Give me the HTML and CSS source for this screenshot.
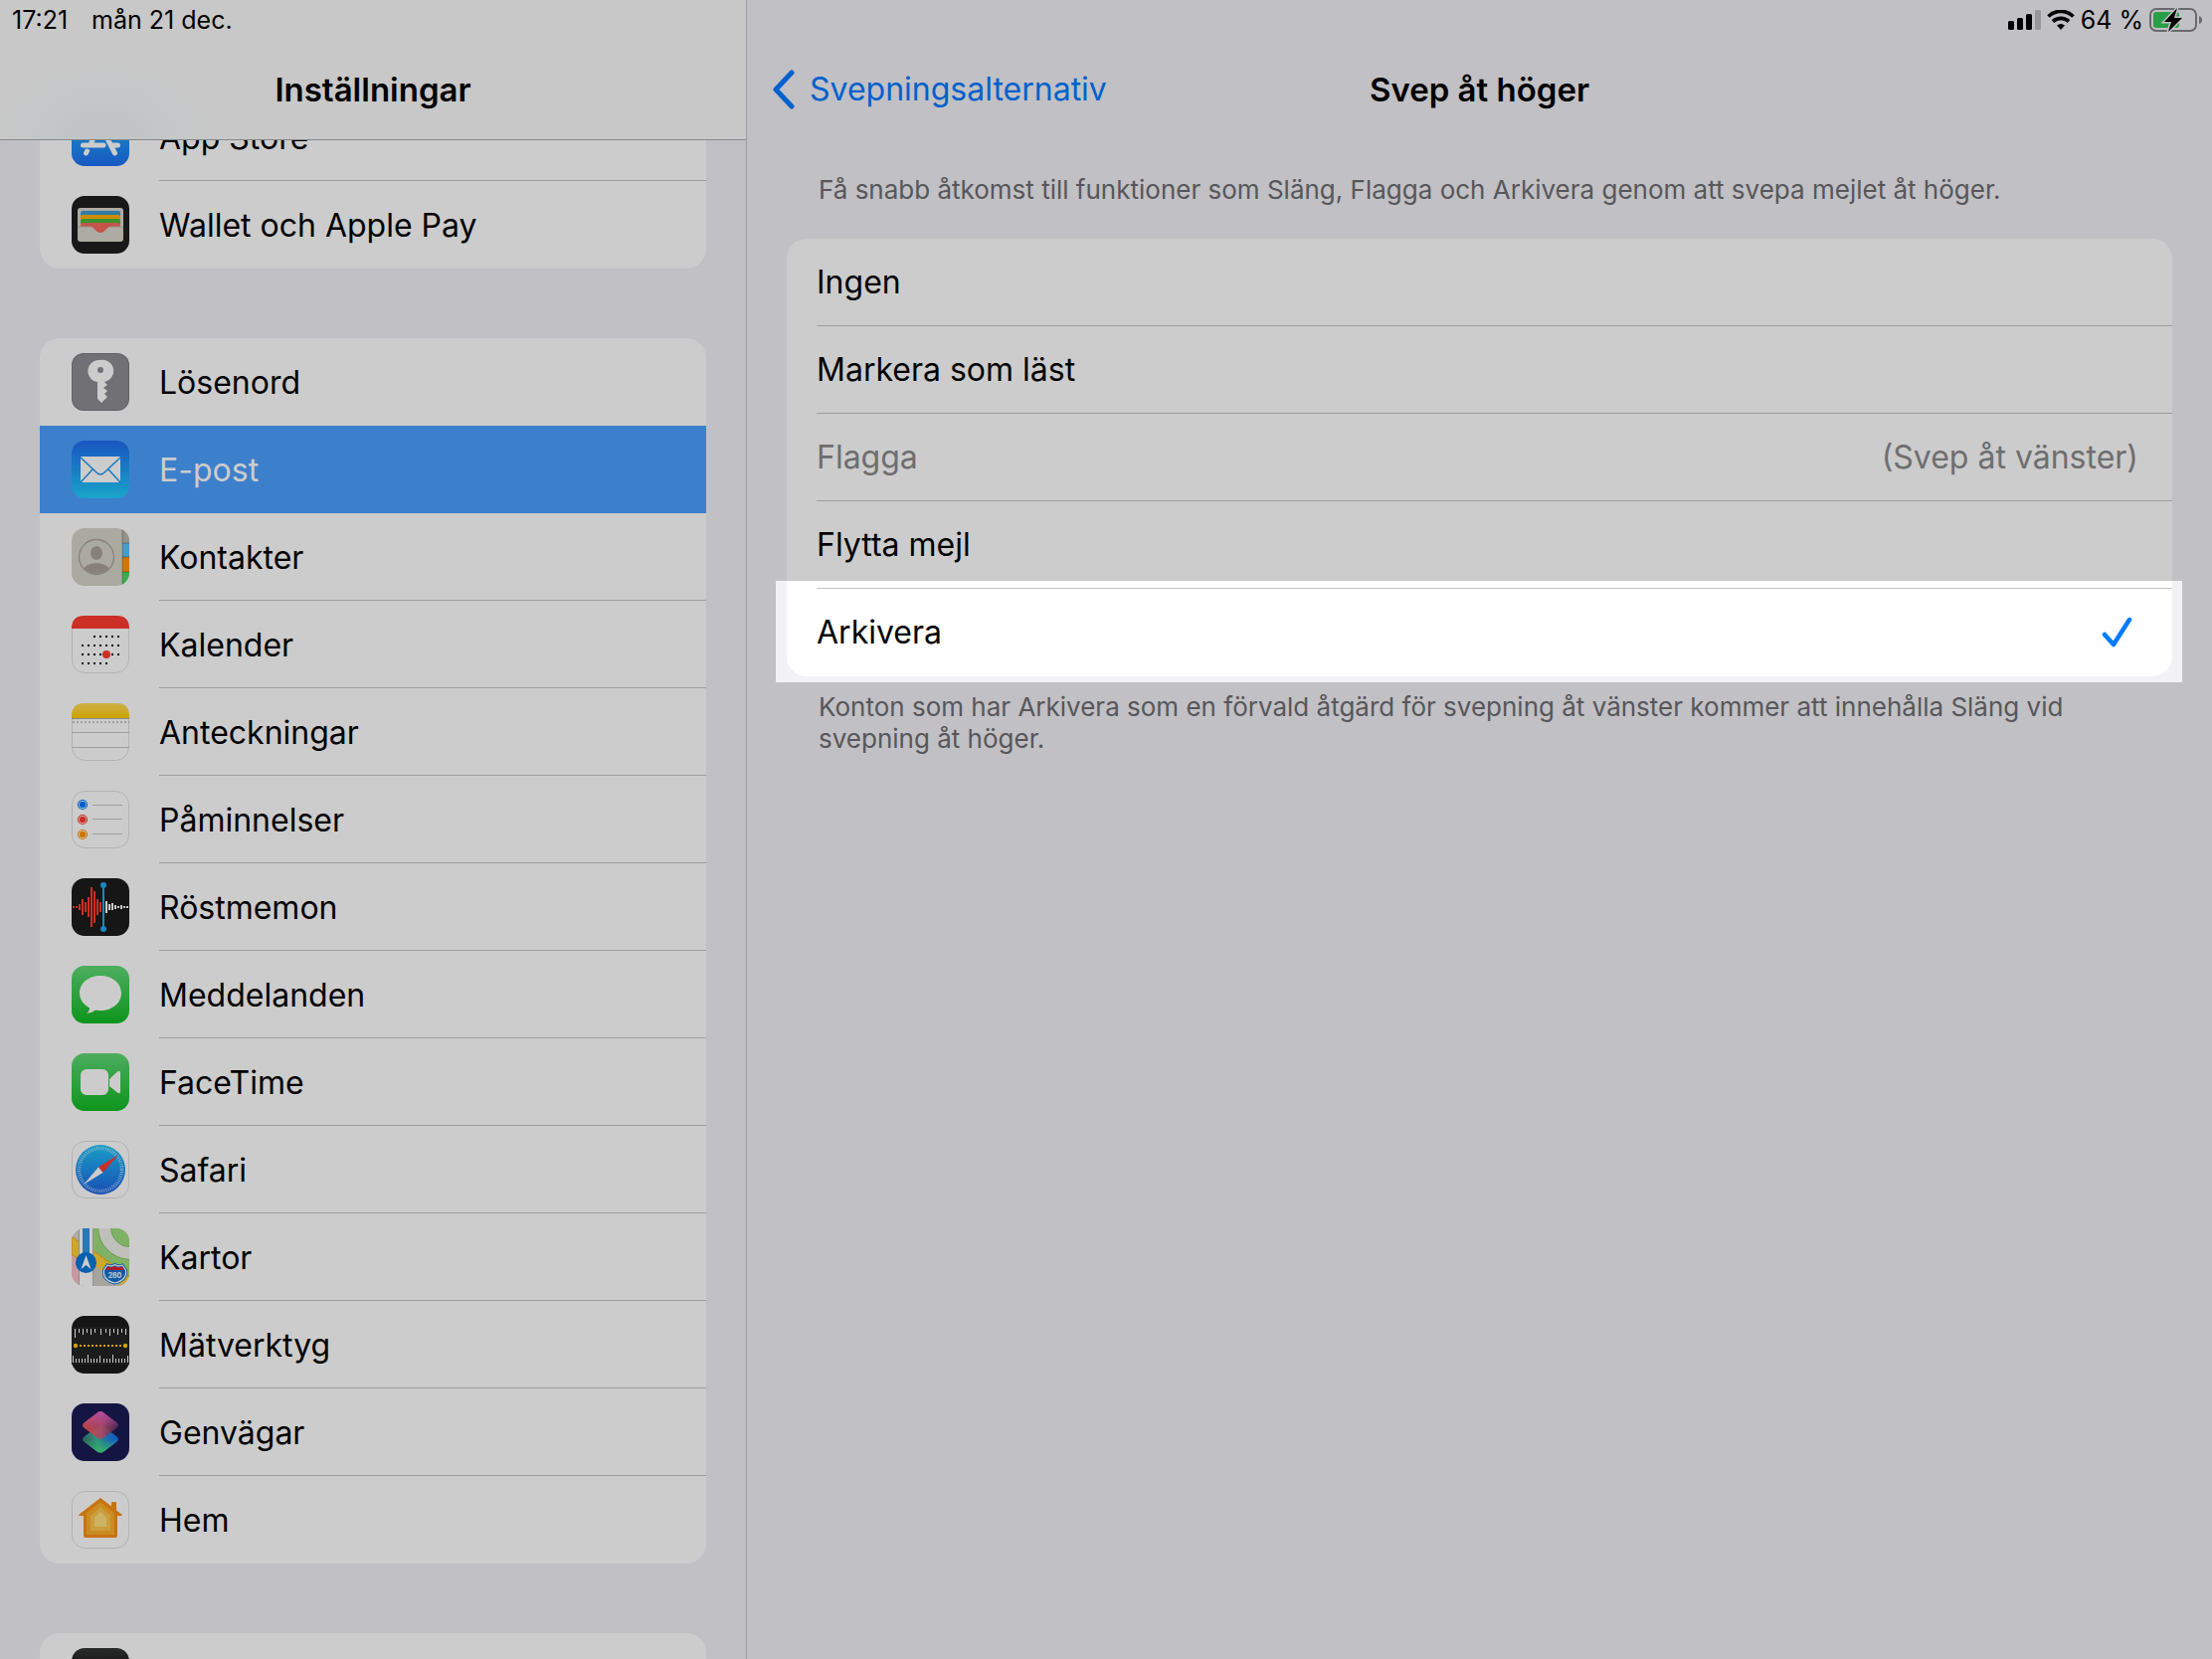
FILE: index.html
```
<!DOCTYPE html>
<html lang="sv">
<head>
<meta charset="utf-8">
<meta name="viewport" content="width=device-width, initial-scale=1">
<title>Inställningar – Svep åt höger</title>
<link rel="stylesheet" href="styles.css">
</head>
<body>
<div class="app">
  <aside class="sidebar">
    <header class="sidebar-header">
      <div class="status">
        <time>17:21</time>
        <span>mån 21 dec.</span>
      </div>
      <h1 class="title sidebar-title">Inställningar</h1>
    </header>
    <nav class="sidebar-list" aria-label="Inställningar">
      <ul class="card scrolled">
        <li><a class="item" href="#appstore">
          <svg class="icon" viewBox="0 0 58 58" aria-hidden="true">
            <defs><linearGradient id="g-store" x1="0" y1="0" x2="0" y2="1"><stop offset="0" stop-color="#1fc4fb"/><stop offset="1" stop-color="#1f6ff2"/></linearGradient></defs>
            <rect width="58" height="58" rx="13" fill="url(#g-store)"/>
            <g stroke="#fff" stroke-width="5" stroke-linecap="round" fill="none"><path d="M32 11L20 34M15.500 43L14.500 45M26 11L43.500 45M11.500 37H32M41 37H46.500"/></g>
          </svg>
          <span class="item-label">App Store</span></a></li>
        <li><a class="item" href="#wallet">
          <svg class="icon" viewBox="0 0 58 58" aria-hidden="true">
            <rect width="58" height="58" rx="13" fill="#1d1e1d"/>
            <rect x="6" y="12" width="46" height="34" rx="3" fill="#d9d6cc"/>
            <path d="M9 20V17Q9 15 11 15H47Q49 15 49 17V20Z" fill="#3c9bd0"/>
            <path d="M9 24V21Q9 19 11 19H47Q49 19 49 21V24Z" fill="#ffb00a"/>
            <path d="M9 28V25Q9 23 11 23H47Q49 23 49 25V28Z" fill="#48b83a"/>
            <path d="M9 31V29Q9 27 11 27H47Q49 27 49 29V31H39C35 31 34 37 29 37C24 37 23 31 19 31Z" fill="#f56b5e"/>
            <path d="M6 31H19M39 31H52" stroke="#b9b6ad"/>
          </svg>
          <span class="item-label">Wallet och Apple Pay</span></a></li>
      </ul>
      <ul class="card">
        <li><a class="item" href="#losenord">
          <svg class="icon" viewBox="0 0 58 58" aria-hidden="true">
            <rect width="58" height="58" rx="12" fill="#7d7c81"/><rect x="1" y="1" width="56" height="56" rx="11" fill="#8e8d92"/>
            <path d="M29 7A11 11 0 0 0 26 29V46L30 50L36 44L33 41L36 38L32 35L36 32L33 29A11 11 0 0 0 29 7Z" fill="#fff"/>
            <circle cx="29" cy="17" r="3" fill="#8e8d92"/>
          </svg>
          <span class="item-label">Lösenord</span></a></li>
        <li><a class="item selected" href="#epost" aria-current="page">
          <svg class="icon" viewBox="0 0 58 58" aria-hidden="true">
            <defs><linearGradient id="g-mail" x1="0" y1="0" x2="0" y2="1"><stop offset="0" stop-color="#1f6cf0"/><stop offset="1" stop-color="#20cefd"/></linearGradient></defs>
            <rect width="58" height="58" rx="13" fill="url(#g-mail)"/>
            <rect x="9" y="16" width="40" height="26" rx="1" fill="#fff"/>
            <path d="M9 17L25 32Q29 36 33 32L49 17M9 42L21 29M49 42L37 29" fill="none" stroke="#2199ee" stroke-width="1.5"/>
          </svg>
          <span class="item-label">E-post</span></a></li>
        <li><a class="item" href="#kontakter">
          <svg class="icon" viewBox="0 0 58 58" aria-hidden="true">
            <defs><clipPath id="c-round"><rect width="58" height="58" rx="13"/></clipPath><clipPath id="c-face"><circle cx="25" cy="29" r="17"/></clipPath></defs>
            <g clip-path="url(#c-round)">
              <rect width="58" height="58" fill="#d6d5c9"/>
              <rect x="51" width="7" height="15" fill="#b9b6ae"/><rect x="51" y="15" width="7" height="14" fill="#5bc3fa"/>
              <rect x="51" y="29" width="7" height="15" fill="#ff960a"/><rect x="51" y="44" width="7" height="14" fill="#4cd864"/>
              <path d="M51 0V58M51 15H58M51 29H58M51 44H58" stroke="#000" stroke-opacity=".25"/>
              <g clip-path="url(#c-face)"><ellipse cx="25" cy="25" rx="6" ry="7" fill="#aaa299"/><ellipse cx="25" cy="44" rx="14" ry="9" fill="#aaa299"/></g>
              <circle cx="25" cy="29" r="17.5" fill="none" stroke="#aaa299" stroke-width="1.3"/>
            </g>
          </svg>
          <span class="item-label">Kontakter</span></a></li>
        <li><a class="item" href="#kalender">
          <svg class="icon" viewBox="0 0 58 58" aria-hidden="true">
            <rect x=".5" y=".5" width="57" height="57" rx="13" fill="#fff" stroke="#dfdfe0"/>
            <path d="M0 13Q0 0 13 0H45Q58 0 58 13Z" fill="#ff3b30"/>
            <path d="M22 21H48M10 30H48M10 39H48M10 48H36" stroke="#000" stroke-width="2" stroke-dasharray="2 4"/>
            <circle cx="35" cy="39" r="5" fill="#fff"/><circle cx="35" cy="39" r="4" fill="#ff3b30"/>
          </svg>
          <span class="item-label">Kalender</span></a></li>
        <li><a class="item" href="#anteckningar">
          <svg class="icon" viewBox="0 0 58 58" aria-hidden="true">
            <defs><linearGradient id="g-notes" x1="0" y1="0" x2="0" y2="1"><stop offset="0" stop-color="#ffdd5c"/><stop offset="1" stop-color="#ffcb05"/></linearGradient></defs>
            <rect x=".5" y=".5" width="57" height="57" rx="13" fill="#fff" stroke="#dfdfe0"/>
            <path d="M0 15V13Q0 0 13 0H45Q58 0 58 13V15Z" fill="url(#g-notes)"/>
            <path d="M0 15.500H58" stroke="#a9a9ad"/><path d="M0 29.500H58M0 44.500H58" stroke="#c6c6c6"/>
            <path d="M1 19H58" stroke="#c9c9c9" stroke-width="2" stroke-dasharray="2 2"/>
          </svg>
          <span class="item-label">Anteckningar</span></a></li>
        <li><a class="item" href="#paminnelser">
          <svg class="icon" viewBox="0 0 58 58" aria-hidden="true">
            <rect x=".5" y=".5" width="57" height="57" rx="13" fill="#fff" stroke="#dfdfe0"/>
            <path d="M21 14.500H51M21 28.500H51M21 43.500H51" stroke="#c6c6c6"/>
            <g fill="none" stroke-width="1.200"><circle cx="11" cy="14" r="4.500" stroke="#007aff"/><circle cx="11" cy="29" r="4.500" stroke="#ff3b30"/><circle cx="11" cy="44" r="4.500" stroke="#ff9500"/></g>
            <circle cx="11" cy="14" r="3.200" fill="#007aff"/><circle cx="11" cy="29" r="3.200" fill="#ff3b30"/><circle cx="11" cy="44" r="3.200" fill="#ff9500"/>
          </svg>
          <span class="item-label">Påminnelser</span></a></li>
        <li><a class="item" href="#rostmemon">
          <svg class="icon" viewBox="0 0 58 58" aria-hidden="true">
            <rect width="58" height="58" rx="13" fill="#1c1c1c"/>
            <path d="M2 28V30M5 28V30M8 26V32M11 21V37M14 24V34M17 19V39M20 9V49M23 13V45M26 21V37M29 24V34" stroke="#ff3b30" stroke-width="2"/>
            <path d="M35 23V35M38 26V32M41 25V32M44 27V31M47 28V30M50 27V31M53 28V30M56 28V30" stroke="#fff" stroke-width="2"/>
            <path d="M32 7V51" stroke="#1faaf5" stroke-width="2"/><circle cx="32" cy="7" r="3" fill="#1faaf5"/><circle cx="32" cy="51" r="3" fill="#1faaf5"/>
          </svg>
          <span class="item-label">Röstmemon</span></a></li>
        <li><a class="item" href="#meddelanden">
          <svg class="icon" viewBox="0 0 58 58" aria-hidden="true">
            <defs><linearGradient id="g-green" x1="0" y1="0" x2="0" y2="1"><stop offset="0" stop-color="#60d977"/><stop offset="1" stop-color="#12ba24"/></linearGradient></defs>
            <rect width="58" height="58" rx="13" fill="url(#g-green)"/>
            <path d="M29 10C17 10 8 17.500 8 27.500C8 34 12 39 18 42.500C18 45 17 46.500 15 47.500C19 48 22 46 24 44.500C25.500 45 27 45 29 45C41 45 50 37.500 50 27.500C50 17.500 41 10 29 10Z" fill="#fff"/>
          </svg>
          <span class="item-label">Meddelanden</span></a></li>
        <li><a class="item" href="#facetime">
          <svg class="icon" viewBox="0 0 58 58" aria-hidden="true">
            <rect width="58" height="58" rx="13" fill="url(#g-green)"/>
            <rect x="9" y="16" width="28" height="26" rx="6" fill="#fff"/>
            <path d="M38 26L46 18.500Q49 16.500 49 20V38Q49 41.500 46 39.500L38 33Z" fill="#fff"/>
          </svg>
          <span class="item-label">FaceTime</span></a></li>
        <li><a class="item" href="#safari">
          <svg class="icon" viewBox="0 0 58 58" aria-hidden="true">
            <defs><linearGradient id="g-safari" x1="0" y1="0" x2="0" y2="1"><stop offset="0" stop-color="#20c5f8"/><stop offset="1" stop-color="#1f63e4"/></linearGradient></defs>
            <rect x=".5" y=".5" width="57" height="57" rx="13" fill="#fff" stroke="#dfdfe0"/>
            <circle cx="29" cy="29" r="25" fill="url(#g-safari)"/>
            <circle cx="29" cy="29" r="21.500" fill="none" stroke="#fff" stroke-opacity=".7" stroke-width="3.500" stroke-dasharray=".8 1.450"/>
            <path d="M47 14L31.500 32L27 26.500Z" fill="#ff3b30"/><path d="M12 44L27 26.500L31.500 32Z" fill="#fff"/>
          </svg>
          <span class="item-label">Safari</span></a></li>
        <li><a class="item" href="#kartor">
          <svg class="icon" viewBox="0 0 58 58" aria-hidden="true">
            <g clip-path="url(#c-round)">
              <rect width="58" height="58" fill="#d8d6ce"/>
              <path d="M0 26L8 31V58H0Z" fill="#fbbfcb"/>
              <path d="M21 0H58V50L21 23Z" fill="#9fdf7d"/>
              <path d="M0 8L8 14V32L0 26Z" fill="#ffd138" stroke="#f0a52c"/>
              <path d="M21 22L60 50V62H52L21 37Z" fill="#ffd138" stroke="#f0a52c"/>
              <path d="M21 36L52 58H21Z" fill="#d0cec6"/>
              <path d="M33 -2C33 13 44 25 60 25" fill="none" stroke="#83b768" stroke-width="13.500"/>
              <path d="M33 -2C33 13 44 25 60 25" fill="none" stroke="#f1f0ea" stroke-width="12"/>
              <rect x="8" width="13.500" height="58" fill="#fff"/><path d="M7.500 0V58M21.500 0V58" stroke="#b4b4a8"/>
              <rect x="11" width="7" height="30" fill="#3597e2"/>
              <circle cx="14.500" cy="34.500" r="10.500" fill="#0878dc"/>
              <path d="M14.500 27L19.500 41L14.500 37L9.500 41Z" fill="#fff"/>
              <path d="M36 37Q40 39 43.500 36.500Q47 39 51 37L54.500 42Q56 52 43.500 55Q31 52 32.500 42Z" fill="#1273d2" stroke="#1273d2" stroke-width="3"/>
              <path d="M36 37Q40 39 43.500 36.500Q47 39 51 37L54.500 42Q56 52 43.500 55Q31 52 32.500 42Z" fill="#1273d2" stroke="#fff" stroke-width="1.200"/>
              <path d="M36 38.500Q40 40 43.500 38Q47 40 51 38.500L53 42H34Z" fill="#dd2430"/>
              <text class="shield-text" x="43.500" y="49.500" text-anchor="middle">280</text>
            </g>
          </svg>
          <span class="item-label">Kartor</span></a></li>
        <li><a class="item" href="#matverktyg">
          <svg class="icon" viewBox="0 0 58 58" aria-hidden="true">
            <rect width="58" height="58" rx="13" fill="#1b1b1b"/><rect y="11" width="58" height="38" fill="#242424"/>
            <path d="M3.500 13V22M7.500 13V17M11.500 13V19M15.500 13V17M19.500 13V19M23.500 13V17M29.500 13V19M34.500 13V17M38.500 13V20M42.500 13V17M46.500 13V19M50.500 13V17M54.500 13V19" stroke="#fff"/>
            <path d="M1.500 40V47M4.500 43V47M7.500 43V47M10.500 43V47M13.500 43V47M16.500 39V47M19.500 43V47M22.500 43V47M25.500 43V47M28.500 40V47M32.500 43V47M35.500 43V47M38.500 43V47M41.500 39V47M44.500 43V47M47.500 43V47M50.500 43V47M53.500 43V47M56.500 40V47" stroke="#fff"/>
            <path d="M8 30H50" stroke="#ffcc0a" stroke-width="2" stroke-dasharray="2 2"/><circle cx="4" cy="30" r="2.200" fill="#ffcc0a"/><circle cx="54" cy="30" r="2.200" fill="#ffcc0a"/>
          </svg>
          <span class="item-label">Mätverktyg</span></a></li>
        <li><a class="item" href="#genvagar">
          <svg class="icon" viewBox="0 0 58 58" aria-hidden="true">
            <defs>
              <linearGradient id="g-low" x1="0" y1=".6" x2="1" y2=".4"><stop offset="0" stop-color="#35706d"/><stop offset=".4" stop-color="#3fb69a"/><stop offset=".75" stop-color="#1d80e4"/><stop offset="1" stop-color="#1676f2"/></linearGradient>
              <linearGradient id="g-lowfade" x1="0" y1="0" x2="0" y2="1"><stop offset=".5" stop-color="#45da86" stop-opacity="0"/><stop offset="1" stop-color="#45da86"/></linearGradient>
              <linearGradient id="g-top" x1="0" y1="0" x2="1" y2="0"><stop offset="0" stop-color="#fa5a50"/><stop offset=".55" stop-color="#d65a82"/><stop offset="1" stop-color="#56305f"/></linearGradient>
              <linearGradient id="g-topfade" x1="0" y1="0" x2="0" y2="1"><stop offset="0" stop-color="#f062dc"/><stop offset=".6" stop-color="#f062dc" stop-opacity="0"/></linearGradient>
            </defs>
            <rect width="58" height="58" rx="13" fill="#1b1b54"/>
            <path d="M26 24L13 33Q9 36 13 39L25 48Q29 51 33 48L45 39Q49 36 45 33L33 24Q29 21 26 24Z" fill="url(#g-low)"/>
            <path d="M26 24L13 33Q9 36 13 39L25 48Q29 51 33 48L45 39Q49 36 45 33L33 24Q29 21 26 24Z" fill="url(#g-lowfade)"/>
            <path d="M25 10L13 19Q9 22 13 25L25 34Q29 37 33 34L45 25Q49 22 45 19L33 10Q29 6 25 10Z" fill="url(#g-top)" fill-opacity=".93"/>
            <path d="M25 10L13 19Q9 22 13 25L25 34Q29 37 33 34L45 25Q49 22 45 19L33 10Q29 6 25 10Z" fill="url(#g-topfade)" fill-opacity=".8"/>
          </svg>
          <span class="item-label">Genvägar</span></a></li>
        <li><a class="item" href="#hem">
          <svg class="icon" viewBox="0 0 58 58" aria-hidden="true">
            <rect x=".5" y=".5" width="57" height="57" rx="13" fill="#fff" stroke="#dfdfe0"/>
            <path d="M29 7L40 15.500V12Q40 11 41 11H44Q45 11 45 12V19.500L51 24Q51 25 50 25H46V45Q46 47 44 47H14Q12 47 12 45V25H8Q7 25 7 24Z" fill="#fa8f14"/>
            <path d="M29 11L43 22V44H15V22Z" fill="#fcae2b"/><path d="M29 16L39 25V40H19V25Z" fill="#fdc64f"/><path d="M29 21L35 27V36H23V27Z" fill="#ffe17c"/>
          </svg>
          <span class="item-label">Hem</span></a></li>
      </ul>
      <ul class="card">
        <li><a class="item" href="#tv" aria-label="TV">
          <svg class="icon" viewBox="0 0 58 58" aria-hidden="true">
            <defs><linearGradient id="g-tv" x1="0" y1="0" x2="0" y2="1"><stop offset="0" stop-color="#333634"/><stop offset=".2" stop-color="#262626"/><stop offset="1" stop-color="#111"/></linearGradient></defs>
            <rect width="58" height="58" rx="13" fill="url(#g-tv)"/>
          </svg></a></li>
      </ul>
    </nav>
  </aside>

  <main class="detail">
    <div class="status status-end">
      <svg class="signal" viewBox="0 0 33 20" role="img" aria-label="Signalstyrka">
        <rect y="11" width="6" height="9" rx="1.500"/><rect x="9" y="8" width="6" height="12" rx="1.500"/><rect x="18" y="4" width="6" height="16" rx="1.500"/><rect x="27" width="6" height="20" rx="1.500" opacity=".22"/>
      </svg>
      <svg class="wifi" viewBox="0 0 28 20" role="img" aria-label="Wifi">
        <path d="M1.500 6.500A18 18 0 0 1 26.500 6.500M6 11.500A12 12 0 0 1 22 11.500" fill="none" stroke="#000" stroke-width="3.800"/>
        <path d="M10 15.500Q14 12.500 18 15.500L14 20Z"/>
      </svg>
      <span>64 %</span>
      <svg class="battery" viewBox="0 0 54 26" role="img" aria-label="Laddar">
        <rect x="1" y="2" width="46" height="22" rx="6" fill="none" stroke="#84848a" stroke-width="2"/>
        <path d="M50 9Q53 10 53 13Q53 16 50 17Z" fill="#84848a"/>
        <rect x="4" y="5" width="26" height="16" rx="3" fill="#34c759"/>
        <path d="M28 1L15 15H22L19 25L33 11H25Z" stroke="#f2f1f6" stroke-width="3"/>
        <path d="M28 1L15 15H22L19 25L33 11H25Z"/>
      </svg>
    </div>
    <header class="navbar">
      <a class="back" href="#svepningsalternativ">
        <svg class="chevron" viewBox="0 0 24 40" aria-hidden="true"><path d="M20 3L4 20L20 37" fill="none" stroke="currentColor" stroke-width="5" stroke-linecap="round" stroke-linejoin="round"/></svg>
        <span>Svepningsalternativ</span>
      </a>
      <h2 class="title">Svep åt höger</h2>
    </header>
    <form class="options">
      <p class="note" id="intro">Få snabb åtkomst till funktioner som Släng, Flagga och Arkivera genom att svepa mejlet åt höger.</p>
      <div class="card" role="radiogroup" aria-labelledby="intro">
        <label class="option"><span>Ingen</span><input type="radio" name="swipe" value="ingen"></label>
        <label class="option"><span>Markera som läst</span><input type="radio" name="swipe" value="last"></label>
        <label class="option disabled"><span>Flagga</span><span>(Svep åt vänster)</span><input type="radio" name="swipe" value="flagga" disabled></label>
        <label class="option"><span>Flytta mejl</span><input type="radio" name="swipe" value="flytta"></label>
        <label class="option spotlight"><span>Arkivera</span><input type="radio" name="swipe" value="arkivera" checked>
          <svg class="check" viewBox="0 0 32 32" aria-hidden="true"><path d="M3 18L12 28L28 3" fill="none" stroke="currentColor" stroke-width="4.500" stroke-linecap="round" stroke-linejoin="round"/></svg>
        </label>
      </div>
      <p class="note">Konton som har Arkivera som en förvald åtgärd för svepning åt vänster kommer att innehålla Släng vid svepning åt höger.</p>
    </form>
  </main>
</div>
</body>
</html>
```
FILE: styles.css
```
* {
  box-sizing: border-box;
}

body {
  margin: 0;
  background: #f2f1f6;
  color: #000;
  font-family: Inter, "Liberation Sans", sans-serif;
  font-size: 32px;
  line-height: 40px;
}

ul {
  margin: 0;
  padding: 0;
  list-style: none;
}

a {
  color: inherit;
  text-decoration: none;
}

.app {
  position: relative;
  display: flex;
  height: 100vh;
  overflow: hidden;
}

.title {
  margin: 0;
  font-size: 33px;
  font-weight: 600;
  line-height: 40px;
}

/* Status row */

.status {
  display: flex;
  align-items: center;
  gap: 24px;
  height: 40px;
  padding: 0 12px;
  font-size: 25px;
  line-height: 32px;
}

.status-end {
  justify-content: flex-end;
  gap: 6px;
  padding: 0 9px;
}

.signal {
  width: 33px;
  height: 20px;
}

.wifi {
  width: 28px;
  height: 20px;
}

.battery {
  width: 54px;
  height: 26px;
}

/* Sidebar */

.sidebar {
  display: flex;
  flex: 0 1 751px;
  flex-direction: column;
  border-right: 1px solid #c6c6ca;
}

.sidebar-header {
  flex: none;
  border-bottom: 1px solid #a9a9ab;
  background: radial-gradient(ellipse 110px 80px at 14% 100%, #f0f6f9, #fafafa);
}

.sidebar-title {
  padding: 30px 0;
  text-align: center;
}

.sidebar-list {
  display: flex;
  flex: 1;
  flex-direction: column;
  gap: 70px;
  min-height: 0;
  padding: 0 40px;
  overflow: hidden;
}

.scrolled {
  margin-top: -47px;
}

.card {
  border-radius: 20px;
  background: #fff;
}

.item {
  display: flex;
  align-items: center;
  gap: 30px;
  height: 88px;
  padding-left: 32px;
}

.icon {
  flex: none;
  width: 58px;
  height: 58px;
}

.item-label {
  flex: 1;
  align-self: stretch;
  border-bottom: 1px solid #c6c6c8;
  line-height: 90px;
}

.item.selected {
  background: #4ca0ff;
  color: #fff;
}

li:last-child .item-label,
li:has(+ li .selected) .item-label,
.selected .item-label {
  border-bottom-color: transparent;
}

.shield-text {
  fill: #fff;
  font-size: 7px;
  font-weight: 700;
}

/* Detail pane */

.detail {
  flex: 1;
  min-width: 0;
}

.navbar {
  display: grid;
  grid-template-columns: 1fr auto 1fr;
  align-items: center;
  height: 100px;
  padding: 0 25px;
}

.back {
  display: flex;
  align-items: center;
  gap: 14px;
  color: #007aff;
}

.chevron {
  width: 24px;
  height: 40px;
}

.options {
  padding: 0 40px;
}

.note {
  margin: 0;
  padding: 10px 32px;
  color: #6d6d72;
  font-size: 26px;
  line-height: 32px;
}

.note:first-child {
  padding: 35px 32px 33px;
}

.note:last-child {
  padding-top: 15px;
}

.option {
  position: relative;
  display: flex;
  align-items: center;
  justify-content: space-between;
  height: 88px;
  margin-left: 30px;
  padding-right: 34px;
}

.option:not(:last-child) {
  border-bottom: 1px solid #c6c6c8;
}

.option input {
  position: absolute;
  margin: 0;
  opacity: 0;
}

.disabled {
  color: #8a8a8d;
}

.check {
  width: 32px;
  height: 32px;
  margin-right: 5px;
  color: #007aff;
}

/* Highlight frame that dims everything outside the chosen row */

.spotlight::after {
  content: "";
  position: absolute;
  z-index: 10;
  inset: -8px -10px -6px -41px;
  box-shadow: 0 0 0 4000px rgba(0, 0, 0, 0.2);
  pointer-events: none;
}
```
